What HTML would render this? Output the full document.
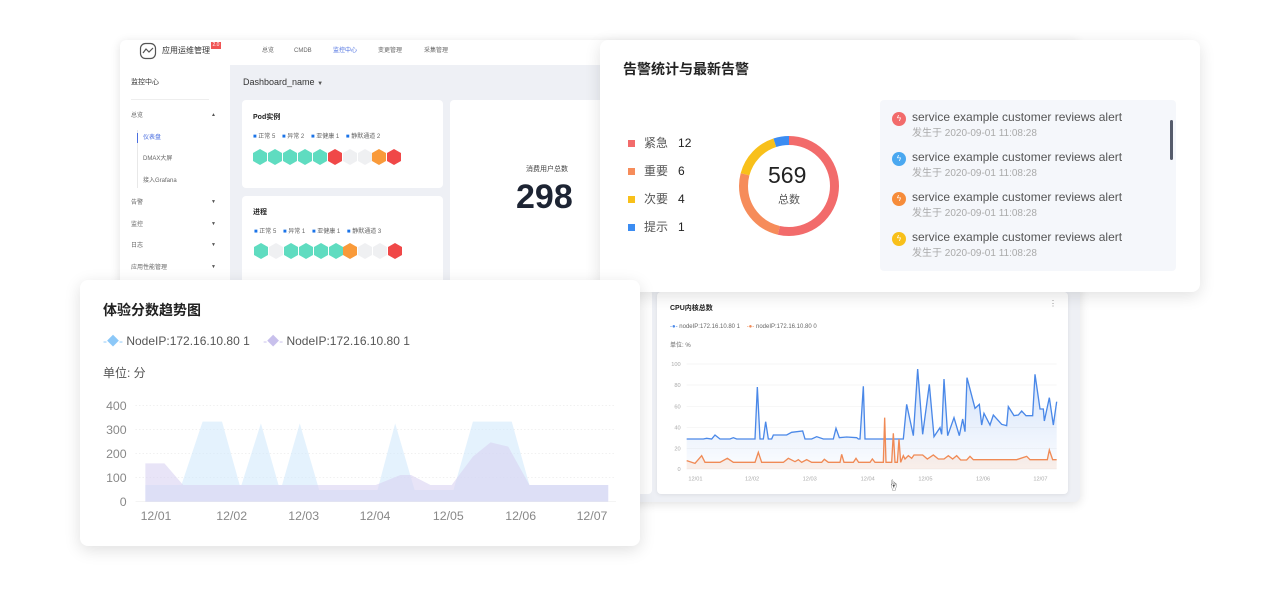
<!DOCTYPE html>
<html><head><meta charset="utf-8"><style>
*{margin:0;padding:0;box-sizing:border-box}
body{width:1280px;height:600px;background:#fff;position:relative;overflow:hidden;font-family:"Liberation Sans","Noto Sans CJK SC",sans-serif;color:#333}
.a{position:absolute}
.t{position:absolute;white-space:nowrap;line-height:1}
</style></head><body>
<!-- base window -->
<div class="a" style="left:120px;top:40px;width:960px;height:462px;background:#eef0f5;border-radius:6px;box-shadow:0 2px 10px rgba(0,0,0,.12);overflow:hidden">
  <div class="a" style="left:0;top:0;width:960px;height:25px;background:#fff"></div>
  <div class="a" style="left:0;top:25px;width:110px;height:440px;background:#fff"></div>
</div>
<svg class="a" style="left:139px;top:42px" width="18" height="18" viewBox="0 0 18 18"><rect x="1.5" y="1.5" width="15" height="15" rx="5" fill="none" stroke="#555" stroke-width="1.2"/><path d="M4 11 L7 7 L10 10 L14 6" fill="none" stroke="#555" stroke-width="1.2"/></svg>
<div class="t" style="left:162px;top:47px;font-size:8px;color:#333">应用运维管理</div>
<div class="a" style="left:211px;top:42px;width:10px;height:7px;background:#f05454;color:#fff;font-size:5px;text-align:center;line-height:7px">2.0</div>
<div class="t" style="left:262px;top:48px;font-size:6px;color:#666">总览</div>
<div class="t" style="left:294px;top:48px;font-size:6px;color:#666">CMDB</div>
<div class="t" style="left:333px;top:48px;font-size:6px;color:#4a6ee0">监控中心</div>
<div class="t" style="left:378px;top:48px;font-size:6px;color:#666">变更管理</div>
<div class="t" style="left:424px;top:48px;font-size:6px;color:#666">采集管理</div>
<!-- sidebar -->
<div class="t" style="left:131px;top:79px;font-size:7px;color:#333">监控中心</div>
<div class="a" style="left:131px;top:99px;width:78px;height:1px;background:#eee"></div>
<div class="t" style="left:131px;top:113px;font-size:6px;color:#666">总览</div>
<div class="a" style="left:137px;top:130px;width:1px;height:58px;background:#e8e8e8"></div>
<div class="a" style="left:137px;top:133px;width:1px;height:10px;background:#4a6ee0"></div>
<div class="t" style="left:143px;top:135px;font-size:6px;color:#4a6ee0">仪表盘</div>
<div class="t" style="left:143px;top:156px;font-size:6px;color:#666">DMAX大屏</div>
<div class="t" style="left:143px;top:178px;font-size:6px;color:#666">接入Grafana</div>
<div class="t" style="left:131px;top:200px;font-size:6px;color:#666">告警</div>
<div class="t" style="left:131px;top:222px;font-size:6px;color:#666">监控</div>
<div class="t" style="left:131px;top:243px;font-size:6px;color:#666">日志</div>
<div class="t" style="left:131px;top:265px;font-size:6px;color:#666">应用性能管理</div>
<div class="t" style="left:211px;top:113px;font-size:5px;color:#555">▲</div>
<div class="t" style="left:211px;top:200px;font-size:5px;color:#555">▼</div>
<div class="t" style="left:211px;top:222px;font-size:5px;color:#555">▼</div>
<div class="t" style="left:211px;top:243px;font-size:5px;color:#555">▼</div>
<div class="t" style="left:211px;top:265px;font-size:5px;color:#555">▼</div>
<div class="t" style="left:243px;top:78px;font-size:9px;color:#333">Dashboard_name <span style="font-size:6px;color:#555">▼</span></div>
<!-- cards -->
<div class="a" style="left:242px;top:100px;width:201px;height:88px;background:#fff;border-radius:4px"></div>
<div class="a" style="left:242px;top:196px;width:201px;height:92px;background:#fff;border-radius:4px"></div>
<div class="a" style="left:450px;top:100px;width:160px;height:188px;background:#fff;border-radius:4px"></div>
<div class="a" style="left:600px;top:290px;width:52px;height:204px;background:#fff;border-radius:4px"></div>
<div class="t" style="left:253px;top:114px;font-size:7px;font-weight:bold;color:#222">Pod实例</div>
<div class="t" style="left:253px;top:134px;font-size:6px;color:#666"><span style="color:#1a73e8">■</span> 正常 5 &nbsp;&nbsp; <span style="color:#1a73e8">■</span> 异常 2 &nbsp;&nbsp; <span style="color:#1a73e8">■</span> 亚健康 1 &nbsp;&nbsp; <span style="color:#1a73e8">■</span> 静默通道 2</div>
<div class="t" style="left:253px;top:209px;font-size:7px;font-weight:bold;color:#222">进程</div>
<div class="t" style="left:254px;top:229px;font-size:6px;color:#666"><span style="color:#1a73e8">■</span> 正常 5 &nbsp;&nbsp; <span style="color:#1a73e8">■</span> 异常 1 &nbsp;&nbsp; <span style="color:#1a73e8">■</span> 亚健康 1 &nbsp;&nbsp; <span style="color:#1a73e8">■</span> 静默通道 3</div>
<svg class="a" style="left:252px;top:148px" width="160" height="120">
<defs><polygon id="h" points="7,0 14,4 14,12 7,16 0,12 0,4"/></defs>
<use href="#h" x="1" y="1" fill="#5fdcc0"/><use href="#h" x="16" y="1" fill="#5fdcc0"/><use href="#h" x="31" y="1" fill="#5fdcc0"/><use href="#h" x="46" y="1" fill="#5fdcc0"/><use href="#h" x="61" y="1" fill="#5fdcc0"/><use href="#h" x="76" y="1" fill="#f04848"/><use href="#h" x="91" y="1" fill="#eff0f2"/><use href="#h" x="106" y="1" fill="#eff0f2"/><use href="#h" x="120" y="1" fill="#f99a3a"/><use href="#h" x="135" y="1" fill="#f04848"/>
<use href="#h" x="2" y="95" fill="#5fdcc0"/><use href="#h" x="17" y="95" fill="#eff0f2"/><use href="#h" x="32" y="95" fill="#5fdcc0"/><use href="#h" x="47" y="95" fill="#5fdcc0"/><use href="#h" x="62" y="95" fill="#5fdcc0"/><use href="#h" x="77" y="95" fill="#5fdcc0"/><use href="#h" x="91" y="95" fill="#f99a3a"/><use href="#h" x="106" y="95" fill="#eff0f2"/><use href="#h" x="121" y="95" fill="#eff0f2"/><use href="#h" x="136" y="95" fill="#f04848"/>
</svg>
<div class="t" style="left:526px;top:166px;font-size:7px;color:#444">消费用户总数</div>
<div class="t" style="left:516px;top:180px;font-size:34px;font-weight:bold;color:#1d2433">298</div>
<!-- CPU card -->
<div class="a" style="left:657px;top:292px;width:411px;height:202px;background:#fff;border-radius:4px;box-shadow:0 1px 4px rgba(0,0,0,.08)"></div>
<div class="t" style="left:670px;top:305px;font-size:7px;font-weight:bold;color:#222">CPU内核总数</div>
<div class="t" style="left:1049px;top:300px;font-size:8px;color:#888">⋮</div>
<div class="t" style="left:670px;top:324px;font-size:6px;color:#666"><span style="color:#4a88e8">-●-</span> nodeIP:172.16.10.80 1 &nbsp;&nbsp; <span style="color:#f08a55">-●-</span> nodeIP:172.16.10.80 0</div>
<div class="t" style="left:670px;top:343px;font-size:6px;color:#666">单位: %</div>
<svg class="a" style="left:640px;top:285px" width="440" height="220" viewBox="0 0 1320 660" font-family="Liberation Sans" font-size="17" fill="#aaa">
<defs><linearGradient id="g" x1="0" y1="0" x2="0" y2="1"><stop offset="0" stop-color="#4a88e8" stop-opacity=".25"/><stop offset="1" stop-color="#4a88e8" stop-opacity=".02"/></linearGradient></defs>
<g stroke="#f2f2f2" stroke-width="2"><line x1="140" y1="237" x2="1250" y2="237"/><line x1="140" y1="300" x2="1250" y2="300"/><line x1="140" y1="364" x2="1250" y2="364"/><line x1="140" y1="428" x2="1250" y2="428"/><line x1="140" y1="491" x2="1250" y2="491"/><line x1="140" y1="552" x2="1250" y2="552"/></g>
<g text-anchor="end"><text x="122" y="243">100</text><text x="122" y="306">80</text><text x="122" y="370">60</text><text x="122" y="434">40</text><text x="122" y="497">20</text><text x="122" y="558">0</text></g>
<g><text x="145" y="586">12/01</text><text x="315" y="586">12/02</text><text x="488" y="586">12/03</text><text x="662" y="586">12/04</text><text x="835" y="586">12/05</text><text x="1008" y="586">12/06</text><text x="1180" y="586">12/07</text></g>
<polygon fill="url(#g)" points="140,462 190,462 200,460 215,462 225,450 240,462 270,462 280,458 290,462 345,462 352,306 360,462 370,462 377,410 385,462 395,462 400,450 440,450 455,442 488,438 495,462 515,462 530,455 550,462 580,462 588,430 598,458 620,456 650,458 655,462 660,462 670,304 675,462 790,462 800,358 820,452 833,252 848,448 868,298 882,455 900,428 905,448 912,282 923,452 942,398 958,452 968,402 975,440 981,278 1005,370 1018,358 1025,420 1032,385 1050,420 1060,390 1085,418 1100,422 1105,365 1122,392 1135,390 1145,378 1158,392 1178,392 1185,268 1200,372 1210,372 1213,408 1228,338 1240,420 1250,350 1250,552 140,552"/>
<polyline fill="none" stroke="#4a88e8" stroke-width="4" points="140,462 190,462 200,460 215,462 225,450 240,462 270,462 280,458 290,462 345,462 352,306 360,462 370,462 377,410 385,462 395,462 400,450 440,450 455,442 488,438 495,462 515,462 530,455 550,462 580,462 588,430 598,458 620,456 650,458 655,462 660,462 670,304 675,462 790,462 800,358 820,452 833,252 848,448 868,298 882,455 900,428 905,448 912,282 923,452 942,398 958,452 968,402 975,440 981,278 1005,370 1018,358 1025,420 1032,385 1050,420 1060,390 1085,418 1100,422 1105,365 1122,392 1135,390 1145,378 1158,392 1178,392 1185,268 1200,372 1210,372 1213,408 1228,338 1240,420 1250,350"/>
<polygon fill="#f08a55" fill-opacity=".12" points="140,527 165,535 185,512 195,532 240,532 262,520 280,532 345,532 355,502 365,532 430,532 445,520 465,530 475,524 485,532 500,524 515,532 545,532 553,523 565,532 600,532 605,508 612,532 640,532 648,520 656,532 690,532 697,522 705,532 730,532 734,398 738,532 755,532 760,445 765,532 772,532 777,462 782,532 790,512 795,522 805,512 815,520 822,510 848,510 862,522 880,510 895,522 912,522 925,512 938,522 950,512 962,525 980,525 990,514 1000,524 1130,524 1160,514 1170,524 1222,524 1228,495 1238,524 1250,524 1250,552 140,552"/>
<polyline fill="none" stroke="#f08a55" stroke-width="4" points="140,527 165,535 185,512 195,532 240,532 262,520 280,532 345,532 355,502 365,532 430,532 445,520 465,530 475,524 485,532 500,524 515,532 545,532 553,523 565,532 600,532 605,508 612,532 640,532 648,520 656,532 690,532 697,522 705,532 730,532 734,398 738,532 755,532 760,445 765,532 772,532 777,462 782,532 790,512 795,522 805,512 815,520 822,510 848,510 862,522 880,510 895,522 912,522 925,512 938,522 950,512 962,525 980,525 990,514 1000,524 1130,524 1160,514 1170,524 1222,524 1228,495 1238,524 1250,524"/>
</svg>
<div class="t" style="left:888px;top:481px;font-size:11px;color:#444">☝</div>
<!-- alert card -->
<div class="a" style="left:600px;top:40px;width:600px;height:252px;background:#fff;border-radius:8px;box-shadow:0 4px 16px rgba(0,0,0,.12)"></div>
<div class="t" style="left:623px;top:62px;font-size:14px;font-weight:bold;color:#222">告警统计与最新告警</div>
<div class="a" style="left:628px;top:140px;width:7px;height:7px;background:#f26b6b"></div>
<div class="a" style="left:628px;top:168px;width:7px;height:7px;background:#f68c5a"></div>
<div class="a" style="left:628px;top:196px;width:7px;height:7px;background:#f8c01a"></div>
<div class="a" style="left:628px;top:224px;width:7px;height:7px;background:#3b8cf2"></div>
<div class="t" style="left:644px;top:137px;font-size:12px;color:#555">紧急 &nbsp; <span style="color:#222">12</span></div>
<div class="t" style="left:644px;top:165px;font-size:12px;color:#555">重要 &nbsp; <span style="color:#222">6</span></div>
<div class="t" style="left:644px;top:193px;font-size:12px;color:#555">次要 &nbsp; <span style="color:#222">4</span></div>
<div class="t" style="left:644px;top:221px;font-size:12px;color:#555">提示 &nbsp; <span style="color:#222">1</span></div>
<svg class="a" style="left:739px;top:136px" width="100" height="100" viewBox="0 0 100 100">
<g transform="rotate(-90 50 50)" fill="none" stroke-width="9">
<circle cx="50" cy="50" r="45.5" stroke="#f26b6b" stroke-dasharray="153 300"/>
<circle cx="50" cy="50" r="45.5" stroke="#f68c5a" stroke-dasharray="0 153 73 300"/>
<circle cx="50" cy="50" r="45.5" stroke="#f8c01a" stroke-dasharray="0 226 45 300"/>
<circle cx="50" cy="50" r="45.5" stroke="#3b8cf2" stroke-dasharray="0 271 15 300"/>
</g></svg>
<div class="t" style="left:768px;top:164px;font-size:23px;color:#222">569</div>
<div class="t" style="left:778px;top:195px;font-size:11px;color:#555">总数</div>
<div class="a" style="left:880px;top:100px;width:296px;height:171px;background:#f5f7fb;border-radius:4px"></div>
<div class="a" style="left:1170px;top:120px;width:3px;height:40px;background:#555b6b;border-radius:2px"></div>
<div class="a" style="left:892px;top:112px;width:14px;height:14px;border-radius:50%;background:#f26b6b;color:#fff;font-size:8px;text-align:center;line-height:14px">ϟ</div>
<div class="a" style="left:892px;top:152px;width:14px;height:14px;border-radius:50%;background:#4aa8f0;color:#fff;font-size:8px;text-align:center;line-height:14px">ϟ</div>
<div class="a" style="left:892px;top:192px;width:14px;height:14px;border-radius:50%;background:#f68c3a;color:#fff;font-size:8px;text-align:center;line-height:14px">ϟ</div>
<div class="a" style="left:892px;top:232px;width:14px;height:14px;border-radius:50%;background:#f8c01a;color:#fff;font-size:8px;text-align:center;line-height:14px">ϟ</div>
<div class="t" style="left:912px;top:111px;font-size:12px;color:#555">service example customer reviews alert</div>
<div class="t" style="left:912px;top:129px;font-size:10px;color:#aaa">发生于 2020-09-01 11:08:28</div>
<div class="t" style="left:912px;top:151px;font-size:12px;color:#555">service example customer reviews alert</div>
<div class="t" style="left:912px;top:169px;font-size:10px;color:#aaa">发生于 2020-09-01 11:08:28</div>
<div class="t" style="left:912px;top:191px;font-size:12px;color:#555">service example customer reviews alert</div>
<div class="t" style="left:912px;top:209px;font-size:10px;color:#aaa">发生于 2020-09-01 11:08:28</div>
<div class="t" style="left:912px;top:231px;font-size:12px;color:#555">service example customer reviews alert</div>
<div class="t" style="left:912px;top:249px;font-size:10px;color:#aaa">发生于 2020-09-01 11:08:28</div>
<!-- score card -->
<div class="a" style="left:80px;top:280px;width:560px;height:266px;background:#fff;border-radius:8px;box-shadow:0 4px 16px rgba(0,0,0,.13)"></div>
<div class="t" style="left:103px;top:303px;font-size:14px;font-weight:bold;color:#222">体验分数趋势图</div>
<div class="t" style="left:103px;top:335px;font-size:12px;color:#555"><span style="color:#8cc8f8">-◆-</span> NodeIP:172.16.10.80 1 &nbsp;&nbsp; <span style="color:#c8c0ec">-◆-</span> NodeIP:172.16.10.80 1</div>
<div class="t" style="left:103px;top:367px;font-size:12px;color:#555">单位: 分</div>
<svg class="a" style="left:80px;top:280px" width="560" height="265" viewBox="0 0 1680 795" font-family="Liberation Sans" font-size="37" fill="#888">
<g transform="matrix(1.06,0,0,1,18,0)">
<g stroke="#e6e6e6" stroke-width="2" stroke-dasharray="4 6"><line x1="140" y1="377" x2="1500" y2="377"/><line x1="140" y1="449" x2="1500" y2="449"/><line x1="140" y1="521" x2="1500" y2="521"/><line x1="140" y1="593" x2="1500" y2="593"/></g>
<line x1="140" y1="665" x2="1500" y2="665" stroke="#eee" stroke-width="2"/>
<polygon fill="#d2eafc" fill-opacity=".6" points="168,615 270,615 330,425 385,425 435,615 440,615 495,430 545,615 555,615 605,430 660,630 825,630 875,430 930,630 1040,630 1095,425 1205,425 1255,615 1478,615 1478,665 168,665"/>
<polygon fill="#d8d2f2" fill-opacity=".6" points="168,550 222,550 275,615 640,615 820,615 890,585 920,585 975,615 1035,615 1095,530 1145,487 1195,500 1255,615 1478,615 1478,665 168,665"/>
</g>
<g text-anchor="end"><text x="140" y="390">400</text><text x="140" y="462">300</text><text x="140" y="534">200</text><text x="140" y="606">100</text><text x="140" y="678">0</text></g>
<g text-anchor="middle"><text x="228" y="720">12/01</text><text x="455" y="720">12/02</text><text x="671" y="720">12/03</text><text x="885" y="720">12/04</text><text x="1105" y="720">12/05</text><text x="1322" y="720">12/06</text><text x="1536" y="720">12/07</text></g>
</svg>
</body></html>
